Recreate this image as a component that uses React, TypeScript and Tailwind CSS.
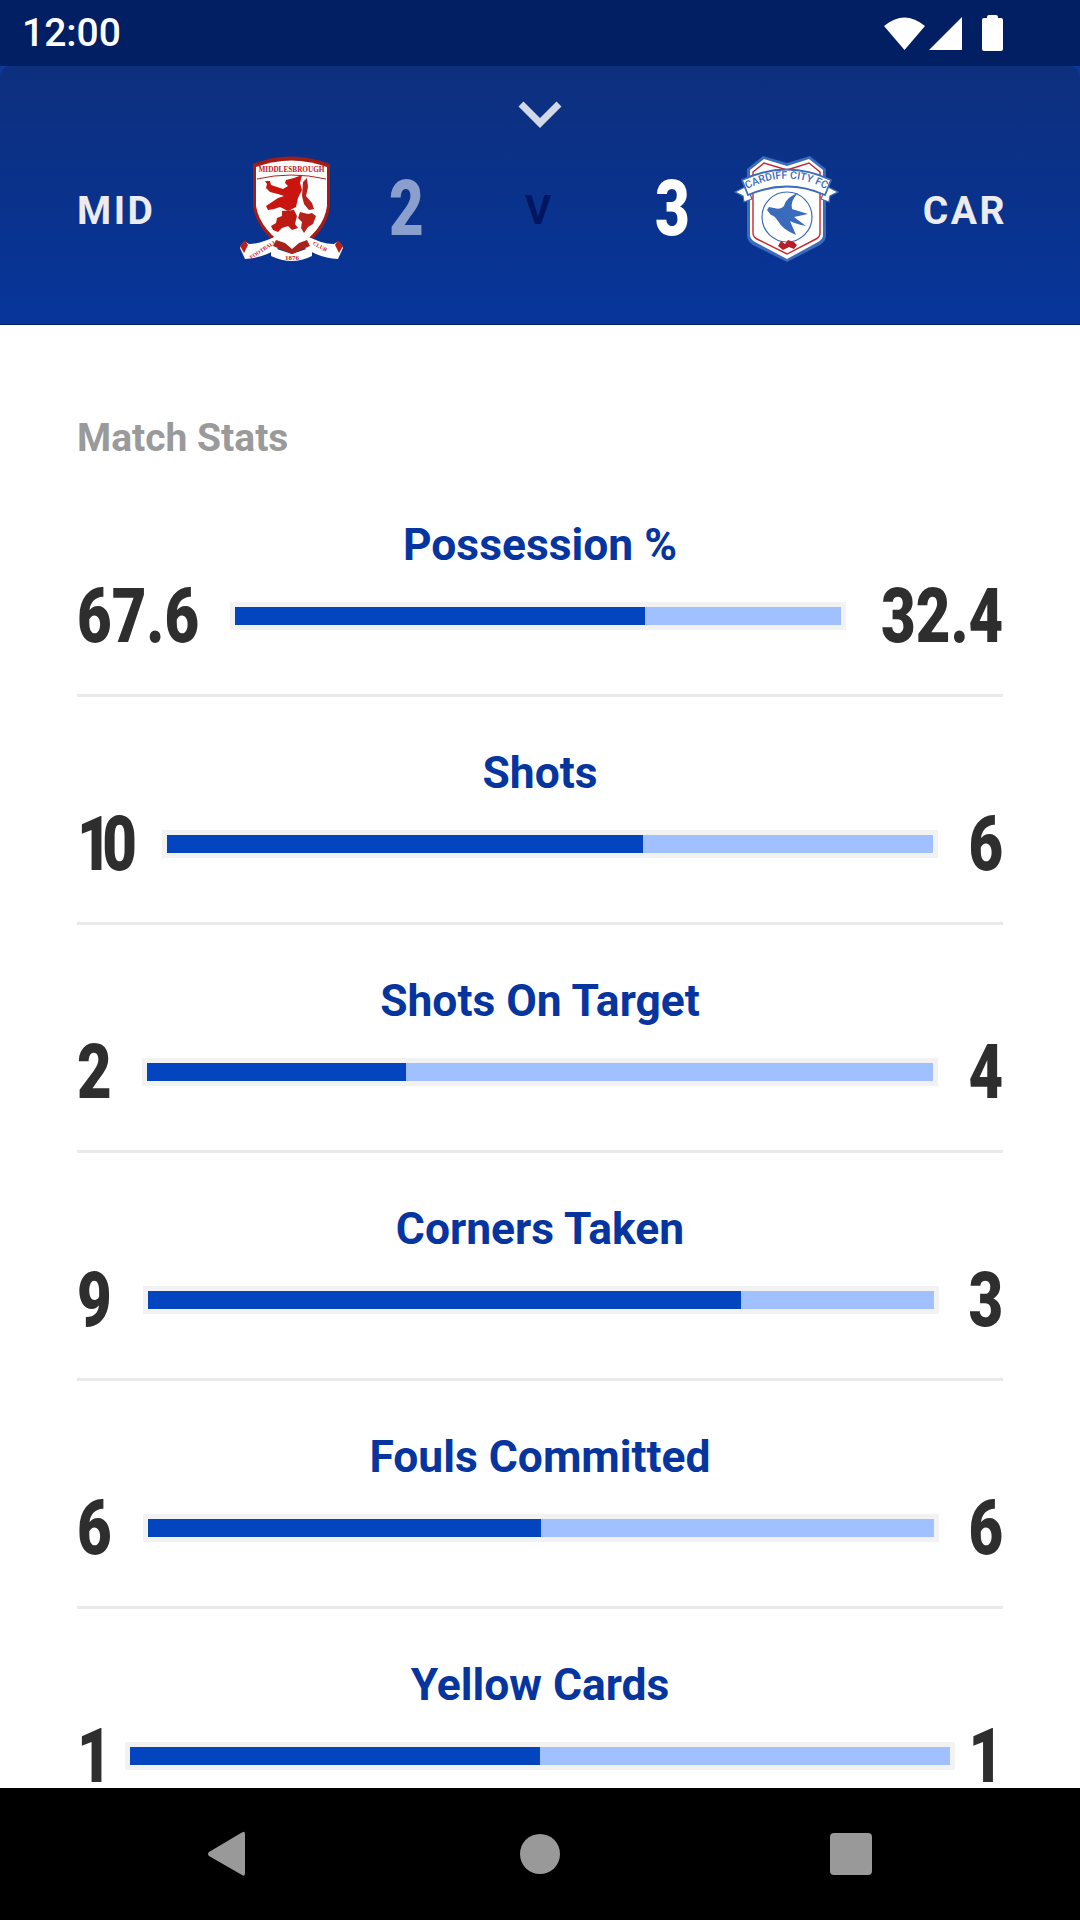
import React from "react";

const stats = [
  { title: "Possession %", left: "67.6", right: "32.4", pct: "w-[67.6%]", leftW: "w-[123px]", rightW: "w-[127px]", leftTrack: "" },
  { title: "Shots", left: "10", right: "6", pct: "w-[62.2%]", leftW: "w-[55px]", rightW: "w-[35px]", leftTrack: "tracking-[-12px]" },
  { title: "Shots On Target", left: "2", right: "4", pct: "w-[33%]", leftW: "w-[35px]", rightW: "w-[35px]", leftTrack: "" },
  { title: "Corners Taken", left: "9", right: "3", pct: "w-[75.4%]", leftW: "w-[36px]", rightW: "w-[34px]", leftTrack: "" },
  { title: "Fouls Committed", left: "6", right: "6", pct: "w-[50%]", leftW: "w-[36px]", rightW: "w-[34px]", leftTrack: "" },
  { title: "Yellow Cards", left: "1", right: "1", pct: "w-[50%]", leftW: "w-[18px]", rightW: "w-[18px]", leftTrack: "" },
];

function MiddlesbroughCrest() {
  return (
    <svg width="103" height="106" viewBox="0 0 103 106">
      <path d="M13 8 Q51 -7 90 8 L90 50 Q87 78 52 99 Q17 78 13 50 Z" fill="#a51c14" />
      <path d="M16 11 Q51 -2 87 11 L87 50 Q84 75 52 94 Q20 75 16 50 Z" fill="#fff" />
      <path d="M17 23 Q51 15 86 23" fill="none" stroke="#b3201a" strokeWidth="1" />
      <text x="51.5" y="16" textAnchor="middle" fontFamily="'Liberation Serif', serif" fontWeight="700" fontSize="8.5" fill="#c8201c" textLength="66" lengthAdjust="spacingAndGlyphs">MIDDLESBROUGH</text>
      <path d="M46 24 L54 22 L62 19 L60 27 L62 34 L58 42 L56 51 L48 55 L40 51 L34 53 L28 54 L26 50 L32 46 L38 42 L44 40 L38 38 L30 36 L26 32 L27 28 L25 25 L30 25 L31 29 L37 31 L43 33 L48 30 L45 27 Z" fill="#c9140f" />
      <path d="M42 55 L54 54 L57 60 L55 68 L58 72 L52 74 L48 70 L42 72 L38 76 L33 74 L31 70 L36 67 L37 62 L42 60 Z" fill="#bf1a12" />
      <path d="M63 26 L67 22 L68 31 L66 40 L72 47 L74 53 L69 54 L64 48 L62 40 Z M60 56 L68 58 L72 57 L76 60 L73 68 L68 71 L64 77 L61 72 L62 66 L58 62 Z" fill="#b8201a" />
      <path d="M0 92 Q1 87 6 86 L9 88 Q22 88 40 78 L44 84 L44 88 Q26 102 5 103 Z" fill="#fff" />
      <path d="M103 92 Q102 87 97 86 L94 88 Q81 88 63 78 L59 84 L59 88 Q77 102 98 103 Z" fill="#fff" />
      <path d="M0 90 L5 84 L8 89 L4 97 Z M103 90 L98 84 L95 89 L99 97 Z" fill="#b8201a" />
      <path d="M31 91 L52 98 L72 91 L72 100 Q52 110 31 100 Z" fill="#fff" />
      <path d="M36 84 L45 87 L52 93 L59 87 L67 84 L70 90 L52 98 L33 90 Z" fill="#a8241a" />
      <text x="52" y="103.5" textAnchor="middle" fontFamily="'Liberation Serif', serif" fontWeight="700" fontSize="7" fill="#c8201c">1876</text>
      <text x="24" y="95" textAnchor="middle" fontFamily="'Liberation Serif', serif" fontWeight="700" fontSize="5.5" fill="#c8201c" transform="rotate(-33 24 95)">FOOTBALL</text>
      <text x="79" y="92" textAnchor="middle" fontFamily="'Liberation Serif', serif" fontWeight="700" fontSize="5.5" fill="#c8201c" transform="rotate(30 79 92)">CLUB</text>
    </svg>
  );
}

function CardiffCrest() {
  return (
    <svg width="105" height="107" viewBox="0 0 105 107">
      <path d="M13 14 L29 1 L53 8 L76 1 L92 14 L92 80 Q92 86 86 90 L53 107 L19 90 Q13 86 13 80 Z" fill="#3a6bbd" />
      <path d="M16 15 L30 4 L53 11 L75 4 L89 15 L89 80 Q89 84 84 87 L53 104 L21 87 Q16 84 16 80 Z" fill="#fff" />
      <path d="M19 17 L30 8 L53 15 L75 8 L86 17 L86 78 Q86 82 82 84 L53 99 L23 84 Q19 82 19 78 Z" fill="none" stroke="#c9252b" strokeWidth="1.4" />
      <path d="M1 37 L13 31 L18 44 L10 47 L9 41 Z M104 37 L92 31 L87 44 L95 47 L96 41 Z" fill="#fff" stroke="#3a6bbd" strokeWidth="1.2" />
      <path d="M8 25 Q53 4 97 25 L91 40 Q53 23 14 40 Z" fill="#fff" stroke="#3a6bbd" strokeWidth="1.8" />
      <path id="cardiff-arc" d="M15 33 Q53 14 90 33" fill="none" />
      <text fontFamily="Roboto, sans-serif" fontWeight="500" fontSize="10.5" fill="#3a6bbd">
        <textPath href="#cardiff-arc" startOffset="50%" textAnchor="middle">CARDIFF CITY FC</textPath>
      </text>
      <circle cx="53" cy="62" r="25" fill="#fff" stroke="#3a6bbd" strokeWidth="1.2" />
      <path d="M33 55 L35 52 L40 53 Q47 55 50 51 Q52 42 64 38 Q56 46 58 54 L74 59 L60 62 L72 71 Q62 69 56 66 L62 80 Q48 74 44 66 Q40 60 37 60 Z" fill="#3a6bbd" />
      <path d="M44 91 L47 86 L51 89 L54 85 L60 87 L63 90 L60 94 L55 92 L49 95 Z" fill="#b4202a" />
    </svg>
  );
}

function StatRow({ stat }: { stat: (typeof stats)[number] }) {
  return (
    <div className="h-[228px] shrink-0 border-b-[3px] border-[#e9e9e9] pt-[51px]">
      <div className="text-center text-[44.4px] leading-[50px] font-bold text-[#0635a0] font-['Roboto',sans-serif]">{stat.title}</div>
      <div className="mt-[16px] flex items-center gap-[30px]">
        <div className={`${stat.leftW} ${stat.leftTrack} shrink-0 whitespace-nowrap text-[76px] leading-[60px] font-black text-[#2e2e2e] font-['Roboto',sans-serif]`}>
          <span className="inline-block origin-left scale-x-[0.787]">{stat.left}</span>
        </div>
        <div className="flex h-[28px] flex-1 bg-[#f2f2f2] p-[5px]">
          <div className={`${stat.pct} h-full bg-[#0245bf]`} />
          <div className="h-full flex-1 bg-[#a0c0ff]" />
        </div>
        <div className={`${stat.rightW} flex shrink-0 justify-end whitespace-nowrap text-[76px] leading-[60px] font-black text-[#2e2e2e] font-['Roboto',sans-serif]`}>
          <span className="inline-block shrink-0 origin-right scale-x-[0.787]">{stat.right}</span>
        </div>
      </div>
    </div>
  );
}

export default function App() {
  return (
    <div className="flex h-[1920px] w-[1080px] flex-col overflow-hidden bg-white">
      <div className="flex h-[66px] shrink-0 items-center justify-between bg-[#011f62] pl-[22px] pr-[77px]">
        <span className="text-[39px] font-medium text-white font-['Roboto',sans-serif]">12:00</span>
        <div className="flex items-center">
          <svg width="41" height="36" viewBox="0 0 41 36"><path d="M0 11 Q20.5 -6 41 11 L20.5 35 Z" fill="#fff" /></svg>
          <svg width="34" height="36" viewBox="0 0 34 36" className="ml-[3px]"><path d="M1 35 L34 2 L34 35 Z" fill="#fff" /></svg>
          <svg width="21" height="36" viewBox="0 0 21 36" className="ml-[20px]"><path d="M5 2 Q5 0 7 0 L14 0 Q16 0 16 2 L16 3 L19 3 Q21 3 21 5 L21 34 Q21 36 19 36 L2 36 Q0 36 0 34 L0 5 Q0 3 2 3 L5 3 Z" fill="#fff" /></svg>
        </div>
      </div>
      <div className="shrink-0 bg-[#0b3a9c]">
        <div className="relative h-[259px] rounded-t-[10px] border-b border-[#04205f] bg-gradient-to-b from-[#0d2f7e] to-[#06359a]">
          <div className="flex h-[258px] items-center pt-[28px] pl-[77px] pr-[73px] text-[#ececf0] font-['Roboto',sans-serif]">
            <span className="mt-[4px] w-[163px] text-[39px] font-bold tracking-[2.5px]">MID</span>
            <MiddlesbroughCrest />
            <span className="ml-[46px] w-[36px] text-[78px] leading-[86px] font-black text-[#8a9fcb]">
              <span className="inline-block origin-left scale-x-[0.77]">2</span>
            </span>
            <span className="ml-[100px] mt-[4px] w-[27px] text-[40px] font-bold text-[#011560]">V</span>
            <span className="ml-[103px] w-[36px] text-[78px] leading-[86px] font-black text-white">
              <span className="inline-block origin-left scale-x-[0.77]">3</span>
            </span>
            <div className="ml-[43px] -mt-[1px]"><CardiffCrest /></div>
            <span className="mt-[4px] ml-auto text-[39px] font-bold tracking-[2.5px]">CAR</span>
          </div>
          <svg width="44" height="28" viewBox="0 0 44 28" className="absolute left-[518px] top-[34px]"><path d="M3 4 L22 23 L41 4" fill="none" stroke="#d2d8e8" strokeWidth="7" /></svg>
        </div>
      </div>
      <div className="flex min-h-0 flex-1 flex-col overflow-hidden px-[77px] pt-[91px]">
        <div className="text-[39px] leading-[44px] font-bold text-[#9a9a9a] font-['Roboto',sans-serif]">Match Stats</div>
        <div className="mt-[9px] flex flex-col">
          {stats.map((s) => (
            <StatRow key={s.title} stat={s} />
          ))}
        </div>
      </div>
      <div className="flex h-[132px] shrink-0 items-center justify-between bg-black pl-[207px] pr-[208px]">
        <svg width="42" height="46" viewBox="0 0 42 46"><path d="M36 1 Q38 0 38 4 L38 42 Q38 46 35 44 L2 25 Q0 23 2 21 L34 2 Z" fill="#999" /></svg>
        <svg width="40" height="40" viewBox="0 0 40 40"><circle cx="20" cy="20" r="20" fill="#999" /></svg>
        <svg width="42" height="42" viewBox="0 0 42 42"><rect x="0" y="0" width="42" height="42" rx="4" fill="#999" /></svg>
      </div>
    </div>
  );
}
